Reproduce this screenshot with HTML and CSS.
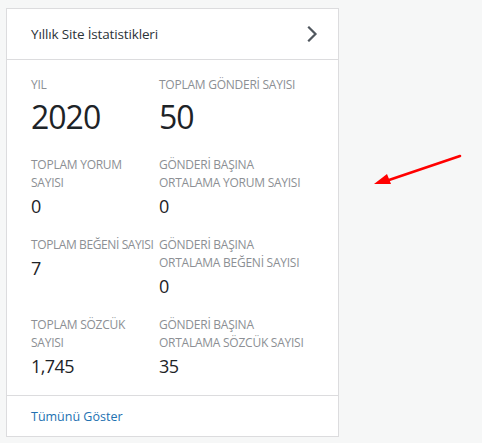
FILE: index.html
```html
<!DOCTYPE html>
<html lang="tr">
<head>
<meta charset="utf-8">
<title>Yıllık Site İstatistikleri</title>
<link rel="stylesheet" href="styles.css">
</head>
<body>
<div class="page">
  <section class="card">
    <header class="card-header">
      <h2 class="card-title">Yıllık Site İstatistikleri</h2>
      <svg class="chevron" width="12" height="16" viewBox="0 0 12 16" aria-hidden="true">
        <polyline points="3,1.5 9.5,8 3,14.5" fill="none" stroke="#50575e" stroke-width="2.2" stroke-linecap="square"/>
      </svg>
    </header>
    <div class="stats">
      <div class="stat">
        <div class="label">YIL</div>
        <div class="value big">2020</div>
      </div>
      <div class="stat">
        <div class="label">TOPLAM GÖNDERİ SAYISI</div>
        <div class="value big">50</div>
      </div>
      <div class="stat">
        <div class="label">TOPLAM YORUM SAYISI</div>
        <div class="value">0</div>
      </div>
      <div class="stat">
        <div class="label">GÖNDERİ BAŞINA ORTALAMA YORUM SAYISI</div>
        <div class="value">0</div>
      </div>
      <div class="stat">
        <div class="label nowrap">TOPLAM BEĞENİ SAYISI</div>
        <div class="value">7</div>
      </div>
      <div class="stat">
        <div class="label">GÖNDERİ BAŞINA ORTALAMA BEĞENİ SAYISI</div>
        <div class="value">0</div>
      </div>
      <div class="stat">
        <div class="label">TOPLAM SÖZCÜK SAYISI</div>
        <div class="value">1,745</div>
      </div>
      <div class="stat">
        <div class="label">GÖNDERİ BAŞINA ORTALAMA SÖZCÜK SAYISI</div>
        <div class="value">35</div>
      </div>
    </div>
    <footer class="card-footer">
      <a class="more" href="#">Tümünü Göster</a>
    </footer>
  </section>
  <svg class="annotation" width="90" height="40" viewBox="0 0 90 40" aria-hidden="true">
    <line x1="86" y1="6" x2="12" y2="31" stroke="#ff0000" stroke-width="2.6" stroke-linecap="round"/>
    <polygon points="0,34 13,24 17,34" fill="#ff0000"/>
  </svg>
</div>
</body>
</html>
```
FILE: styles.css
```css
html, body {
  margin: 0;
  padding: 0;
  background: #f6f7f7;
}
body {
  font-family: "Open Sans", "Noto Sans", "Liberation Sans", sans-serif;
  color: #1d2327;
}
.page {
  position: relative;
  padding: 8px 0 0 6px;
  height: 443px;
  box-sizing: border-box;
}
.card {
  width: 333px;
  height: 429px;
  box-sizing: border-box;
  background: #fff;
  border: 1px solid #dcdcde;
  display: flex;
  flex-direction: column;
}
.card-header {
  display: flex;
  align-items: center;
  justify-content: space-between;
  padding: 15px 20px 15px 24px;
  border-bottom: 1px solid #dcdcde;
}
.card-title {
  margin: 0;
  font-size: 13.5px;
  line-height: 20px;
  font-weight: 400;
  color: #2c3338;
  letter-spacing: -0.15px;
}
.chevron {
  display: block;
}
.stats {
  flex: 1;
  display: grid;
  grid-template-columns: 128px 1fr;
  row-gap: 18px;
  padding: 16px 24px 0 24px;
  align-content: start;
}
.label {
  font-size: 12px;
  line-height: 18px;
  color: #8c8f94;
  letter-spacing: -0.25px;
  padding-right: 6px;
}
.label.nowrap {
  white-space: nowrap;
  padding-right: 0;
  letter-spacing: -0.4px;
}
.value {
  font-size: 18px;
  line-height: 24px;
  margin-top: 2px;
  color: #1d2327;
  letter-spacing: -0.6px;
}
.value.big {
  font-size: 32px;
  line-height: 42px;
  margin-top: 2px;
  letter-spacing: -1px;
}
.card-footer {
  border-top: 1px solid #dcdcde;
  padding: 12px 24px 10px;
}
.more {
  font-size: 12.5px;
  line-height: 18px;
  color: #2271b1;
  text-decoration: none;
  display: block;
}
.annotation {
  position: absolute;
  left: 374px;
  top: 150px;
}
```
